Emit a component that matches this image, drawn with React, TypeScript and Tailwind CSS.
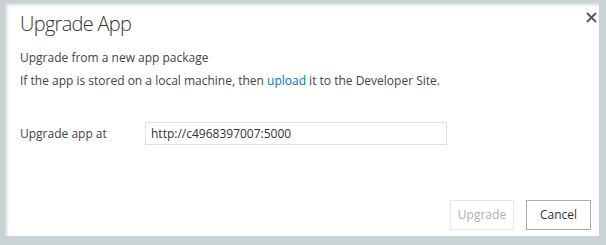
import React from "react";

export default function App() {
  const font = { fontFamily: '"Segoe UI", "Open Sans", "Noto Sans", sans-serif' };
  return (
    <div className="w-[606px] h-[245px] bg-[#c9d3d6] pt-[3px] pl-[5px] pr-[7px] pb-[9px]" style={font}>
      <div className="relative h-full w-full bg-white shadow-[inset_2px_2px_3px_rgba(120,140,150,0.35)] flex flex-col text-[#444] pl-[15px] pr-[8px]">
        <button className="absolute right-[0px] top-[6px] w-[16px] h-[16px] flex items-center justify-center">
          <svg width="11" height="11" viewBox="0 0 11 11">
            <path d="M1 1 L10 10 M10 1 L1 10" stroke="#555" strokeWidth="1.8" />
          </svg>
        </button>
        <h1 className="text-[20px] font-light leading-none mt-[11px] text-[#333] tracking-[-0.7px]">Upgrade App</h1>
        <p className="text-[12px] leading-[16px] mt-[16px]">Upgrade from a new app package</p>
        <p className="text-[12px] leading-[16px] mt-[7px]">
          If the app is stored on a local machine, then <span className="text-[#0072c6]">upload</span> it to the Developer Site.
        </p>
        <div className="flex items-center mt-[33px]">
          <span className="text-[12px] w-[125px]">Upgrade app at</span>
          <div className="w-[302px] h-[23px] border border-[#e1e1e1] flex items-center px-[5px] text-[12px] text-[#333]">
            http://c4968397007:5000
          </div>
        </div>
        <div className="flex-1" />
        <div className="flex justify-end gap-[12px] mb-[6px]">
          <button className="w-[64px] h-[30px] border border-[#e6e6e6] text-[12px] text-[#b1b1b1]">Upgrade</button>
          <button className="w-[65px] h-[30px] border border-[#ababab] text-[12px] text-[#333]">Cancel</button>
        </div>
      </div>
    </div>
  );
}
